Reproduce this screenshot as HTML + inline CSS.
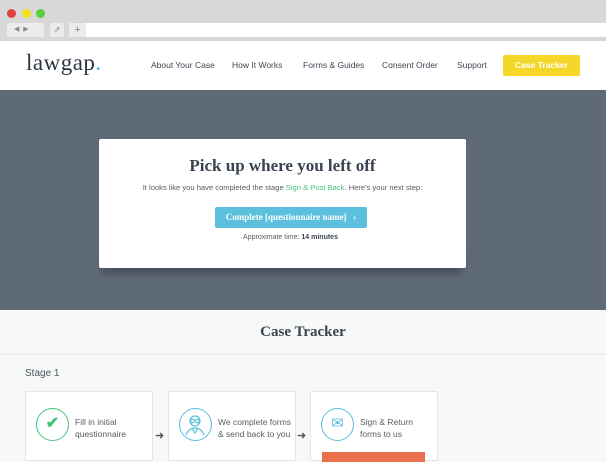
<!DOCTYPE html>
<html><head><style>
*{margin:0;padding:0;box-sizing:border-box}
body{width:606px;height:454px;overflow:hidden;background:#f7f8f8;font-family:"Liberation Sans",sans-serif;position:relative}
.a{position:absolute}
.nav{font-size:8.5px;color:#3e4754;top:60px}
.card{background:#fff;border:1px solid #e3e5e6;border-radius:2px;width:128px;height:70px;top:391px}
.ct{font-size:8.5px;color:#555d66;line-height:12px;top:24px;left:49px;white-space:nowrap}
.circ{width:33px;height:33px;border-radius:50%;border:1.5px solid;top:16px;left:10px}
</style></head><body>
<div class="a" style="left:0;top:0;width:606px;height:41px;background:#d8d8d8"></div>
<div class="a" style="left:7px;top:9px;width:9px;height:9px;border-radius:50%;background:#e0403e"></div>
<div class="a" style="left:22px;top:9px;width:9px;height:9px;border-radius:50%;background:#f2e11c"></div>
<div class="a" style="left:36px;top:9px;width:9px;height:9px;border-radius:50%;background:#57d03c"></div>
<div class="a" style="left:7px;top:23px;width:37px;height:14px;background:#ececec;border-radius:2px;font-size:7px;color:#888;line-height:14px;padding-left:7px">◀ &nbsp;▶</div>
<div class="a" style="left:50px;top:23px;width:14px;height:14px;background:#ececec;border-radius:2px;font-size:8px;color:#888;text-align:center;line-height:14px">⇗</div>
<div class="a" style="left:69px;top:23px;width:17px;height:14px;background:#ececec;font-size:11px;color:#888;text-align:center;line-height:14px">+</div>
<div class="a" style="left:86px;top:23px;width:520px;height:14px;background:#fff"></div>
<div class="a" style="left:0;top:41px;width:606px;height:49px;background:#fff"></div>
<div class="a" style="left:26px;top:50px;font-family:'Liberation Serif',serif;font-size:23px;color:#2c3642;letter-spacing:0.5px">lawgap<span style="color:#3cb4d8">.</span></div>
<div class="a nav" style="left:151px">About Your Case</div>
<div class="a nav" style="left:232px">How It Works</div>
<div class="a nav" style="left:303px">Forms &amp; Guides</div>
<div class="a nav" style="left:382px">Consent Order</div>
<div class="a nav" style="left:457px">Support</div>
<div class="a" style="left:503px;top:55px;width:77px;height:21px;background:#f5d72a;border-radius:2px;color:#fff;font-size:8.5px;font-weight:bold;text-align:center;line-height:21px">Case Tracker</div>
<div class="a" style="left:0;top:90px;width:606px;height:220px;background:#5f6a77"></div>
<div class="a" style="left:102px;top:262px;width:360px;height:12px;background:rgba(40,45,55,.45);filter:blur(4px)"></div>
<div class="a" style="left:99px;top:139px;width:367px;height:129px;background:#fff;border-radius:2px;text-align:center">
<div style="margin-top:17px;font-family:'Liberation Serif',serif;font-weight:bold;font-size:17px;color:#3a4350">Pick up where you left off</div>
<div style="margin-top:7px;font-size:7.6px;color:#555d66">It looks like you have completed the stage <span style="color:#46c37b">Sign &amp; Post Back</span>. Here's your next step:</div>
<div style="margin:15px 0 0 116px;width:152px;height:21px;background:#5bbfdd;border-radius:2px;color:#fff;font-family:'Liberation Serif',serif;font-weight:bold;font-size:9px;line-height:21px">Complete [questionnaire name] &nbsp;&nbsp;›</div>
<div style="margin-top:6px;font-size:7px;color:#555d66;padding-left:16px">Approximate time: <b style="color:#3a4350">14 minutes</b></div>
</div>
<div class="a" style="left:0;top:324px;width:606px;text-align:center;font-family:'Liberation Serif',serif;font-weight:bold;font-size:15px;color:#3a4350">Case Tracker</div>
<div class="a" style="left:0;top:354px;width:606px;height:1px;background:#e6e8e9"></div>
<div class="a" style="left:25px;top:368px;font-size:10px;color:#4a525c">Stage 1</div>
<div class="a card" style="left:25px"><div class="a circ" style="border-color:#46c37b;color:#46c37b;font-size:16px;text-align:center;line-height:30px;font-weight:bold">✔</div><div class="a ct">Fill in initial<br>questionnaire</div></div>
<div class="a" style="left:155px;top:429px;font-size:11px;color:#4a525c">➜</div>
<div class="a card" style="left:168px"><div class="a circ" style="border-color:#5bbfdd"><svg width="30" height="30" viewBox="0 0 30 30" fill="none" stroke="#5bbfdd" stroke-width="1.2"><circle cx="15" cy="12" r="5"/><circle cx="12.5" cy="12" r="1.8"/><circle cx="17.5" cy="12" r="1.8"/><path d="M6 26c2-5 5-7 9-7s7 2 9 7M12 19l3 5 3-5"/></svg></div><div class="a ct">We complete forms<br>&amp; send back to you</div></div>
<div class="a" style="left:297px;top:429px;font-size:11px;color:#4a525c">➜</div>
<div class="a card" style="left:310px"><div class="a circ" style="border-color:#5bbfdd;color:#5bbfdd;font-size:15px;text-align:center;line-height:29px">✉</div><div class="a ct">Sign &amp; Return<br>forms to us</div><div class="a" style="left:11px;top:60px;width:103px;height:10px;background:#e8704a"></div></div>
</body></html>
